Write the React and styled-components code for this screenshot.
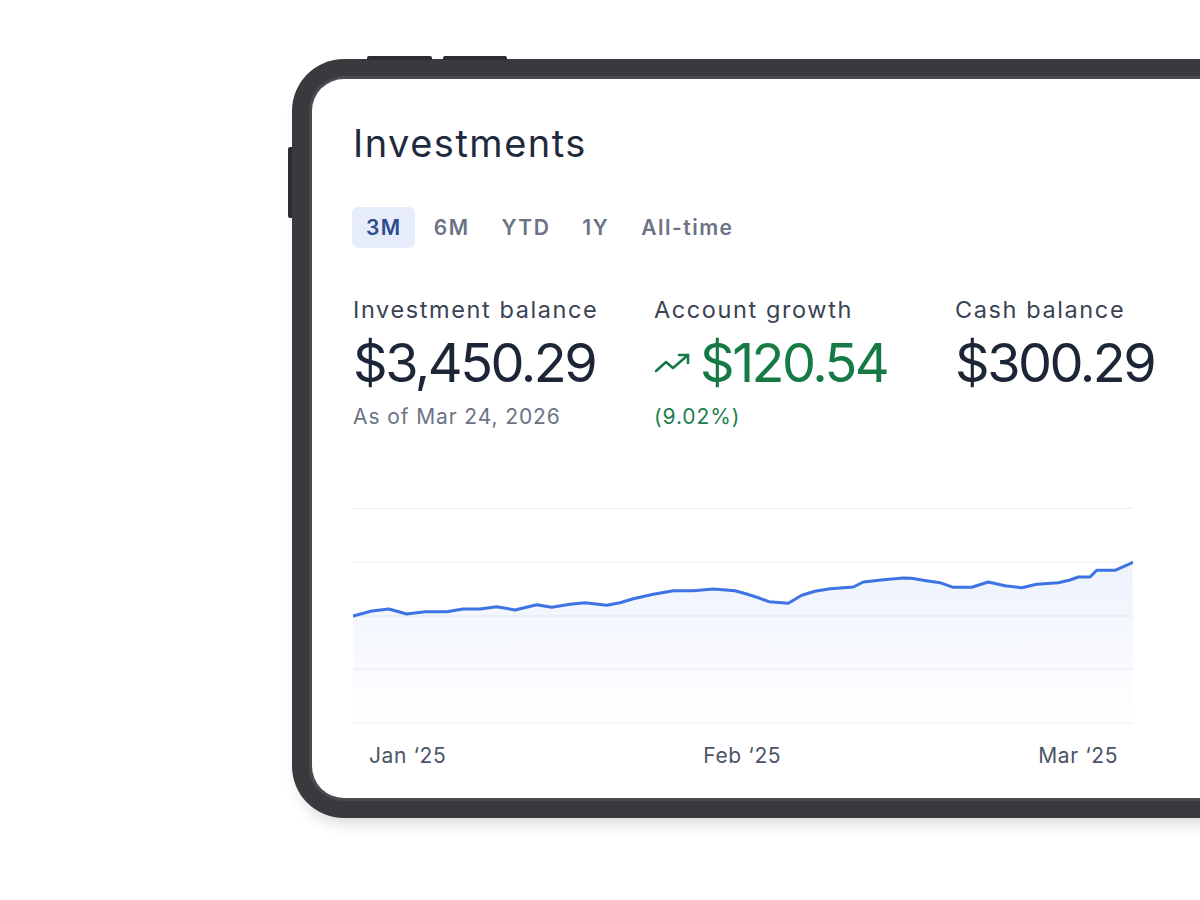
import React from "react";
import styled, { createGlobalStyle, css } from "styled-components";

const GlobalStyle = createGlobalStyle`
  html, body {
    margin: 0;
    padding: 0;
    background: #ffffff;
    overflow: hidden;
  }
  body {
    font-family: Inter, "Noto Sans", sans-serif;
  }
`;

const Stage = styled.main`
  width: 1200px;
  height: 900px;
  overflow: hidden;
  box-sizing: border-box;
  padding: 59px 0 0 292px;
`;

const Device = styled.div`
  position: relative;
  width: 1100px;
  height: 759px;
  box-sizing: border-box;
  padding: 20px;
  background: #393a3e;
  border-radius: 52px;
  box-shadow: 0 12px 16px -8px rgba(0, 0, 0, 0.18);
`;

const HardButton = styled.span`
  position: absolute;
  background: #2c2d31;
  ${(p) =>
    p.$top
      ? css`
          top: -3px;
          left: ${p.$at}px;
          width: ${p.$len}px;
          height: 4px;
          border-radius: 2px 2px 0 0;
        `
      : css`
          left: -4px;
          top: ${p.$at}px;
          width: 4px;
          height: ${p.$len}px;
          border-radius: 2px 0 0 2px;
        `}
`;

const Screen = styled.div`
  height: 100%;
  box-sizing: border-box;
  background: #ffffff;
  border-radius: 32px;
  box-shadow: 0 0 0 3px #4a4b50;
  padding: 41px 0 0 41px;
  display: flex;
  flex-direction: column;
`;

const Content = styled.div`
  width: 780px;
  display: flex;
  flex-direction: column;
`;

const Title = styled.h1`
  margin: 0;
  font-size: 38px;
  line-height: 46px;
  font-weight: 400;
  color: #1f2a3c;
  letter-spacing: 1.5px;
`;

const Tabs = styled.div`
  display: flex;
  gap: 5px;
  margin-top: 41px;
  margin-left: -1px;
`;

const Tab = styled.button`
  border: 0;
  font-family: inherit;
  font-size: 21px;
  font-weight: 600;
  letter-spacing: 1.5px;
  height: 41px;
  padding: 0 13px 0 14px;
  border-radius: 6px;
  cursor: pointer;
  background: ${(p) => (p.$active ? "#e7ecfa" : "transparent")};
  color: ${(p) => (p.$active ? "#2c4a8c" : "#6b7385")};
`;

const Stats = styled.div`
  display: grid;
  grid-template-columns: repeat(3, 301px);
  margin-top: 46px;
`;

const Stat = styled.div`
  display: flex;
  flex-direction: column;
`;

const Label = styled.div`
  font-size: 23.5px;
  line-height: 29px;
  letter-spacing: 1.6px;
  color: #394354;
  margin-top: 1px;
`;

const Value = styled.div`
  display: flex;
  align-items: center;
  gap: 8px;
  margin-top: 10px;
  font-size: 54px;
  line-height: 58px;
  letter-spacing: -2.5px;
  color: ${(p) => (p.$tone === "up" ? "#167a45" : "#1c2637")};
`;

const Sub = styled.div`
  margin-top: 12px;
  font-size: 21px;
  line-height: 26px;
  letter-spacing: 0.9px;
  color: ${(p) => (p.$tone === "up" ? "#1d8050" : "#6b7385")};
`;

const ChartBox = styled.div`
  margin-top: 78px;
  width: 780px;
  height: 216px;
`;

const Axis = styled.div`
  display: flex;
  justify-content: space-between;
  padding: 0 15px 0 16px;
  margin-top: 19px;
  font-size: 21px;
  line-height: 26px;
  letter-spacing: 0.6px;
  color: #4b5565;
`;

const TrendIcon = () => (
  <svg width="38" height="24" viewBox="0 0 38 24" fill="none">
    <polyline
      points="2,20 12,11 19,17 34,4"
      stroke="#167a45"
      strokeWidth="2.6"
      strokeLinecap="round"
      strokeLinejoin="round"
    />
    <polyline
      points="25,4 34,4 34,12"
      stroke="#167a45"
      strokeWidth="2.6"
      strokeLinecap="round"
      strokeLinejoin="round"
    />
  </svg>
);

const points = [
  [0, 108], [18.7, 103], [36, 101], [53.7, 106], [72, 103.7], [93.7, 103.7],
  [110, 101], [127, 101], [143.7, 98.7], [162, 102], [183.7, 96.7], [198.7, 99.3],
  [217, 96.3], [232, 94.7], [253.7, 97.3], [267, 94.7], [280.3, 90.7], [300.3, 86.3],
  [320.3, 82.7], [340.3, 82.7], [360.3, 81], [382, 82.7], [393.7, 86], [407, 90.3],
  [416, 93.7], [435.3, 95.3], [448.7, 87.3], [462, 83.3], [477, 80.7], [500.3, 79],
  [510.3, 74], [530.3, 71.7], [550.3, 70], [558.7, 70.3], [570.3, 72.3], [587, 74.7],
  [600.3, 79.3], [618.7, 79.3], [635.3, 74], [652, 77.7], [668.7, 79.7], [683.7, 76.3],
  [705.3, 74.7], [717, 72], [725.3, 69], [737, 69], [743.7, 62.3], [762, 62.3],
  [779.5, 54.7],
];

const Chart = () => {
  const line = points.map(([x, y]) => `${x},${y}`).join(" ");
  const area = `0,215 ${line} 780,215`;
  return (
    <svg width="780" height="216" viewBox="0 0 780 216">
      <defs>
        <linearGradient id="fillGrad" x1="0" y1="0" x2="0" y2="1">
          <stop offset="0%" stopColor="#3b6fe0" stopOpacity="0.09" />
          <stop offset="100%" stopColor="#3b6fe0" stopOpacity="0" />
        </linearGradient>
      </defs>
      {[0.5, 54, 108, 161, 215].map((y) => (
        <line key={y} x1="0" x2="780" y1={y} y2={y} stroke="#eceef2" strokeWidth="1.2" />
      ))}
      <polygon points={area} fill="url(#fillGrad)" />
      <polyline
        points={line}
        fill="none"
        stroke="#3d73e3"
        strokeWidth="3"
        strokeLinejoin="round"
        strokeLinecap="round"
      />
    </svg>
  );
};

const tabs = ["3M", "6M", "YTD", "1Y", "All-time"];

export default function App() {
  return (
    <>
      <GlobalStyle />
      <Stage>
        <Device>
          <HardButton $top $at={75} $len={65} />
          <HardButton $top $at={151} $len={64} />
          <HardButton $at={88} $len={71} />
          <Screen>
            <Content>
              <Title>Investments</Title>
              <Tabs>
                {tabs.map((t, i) => (
                  <Tab key={t} $active={i === 0}>
                    {t}
                  </Tab>
                ))}
              </Tabs>
              <Stats>
                <Stat>
                  <Label>Investment balance</Label>
                  <Value>$3,450.29</Value>
                  <Sub>As of Mar 24, 2026</Sub>
                </Stat>
                <Stat>
                  <Label>Account growth</Label>
                  <Value $tone="up">
                    <TrendIcon />
                    $120.54
                  </Value>
                  <Sub $tone="up">(9.02%)</Sub>
                </Stat>
                <Stat>
                  <Label>Cash balance</Label>
                  <Value>$300.29</Value>
                </Stat>
              </Stats>
              <ChartBox>
                <Chart />
              </ChartBox>
              <Axis>
                <span>Jan ‘25</span>
                <span>Feb ‘25</span>
                <span>Mar ‘25</span>
              </Axis>
            </Content>
          </Screen>
        </Device>
      </Stage>
    </>
  );
}
